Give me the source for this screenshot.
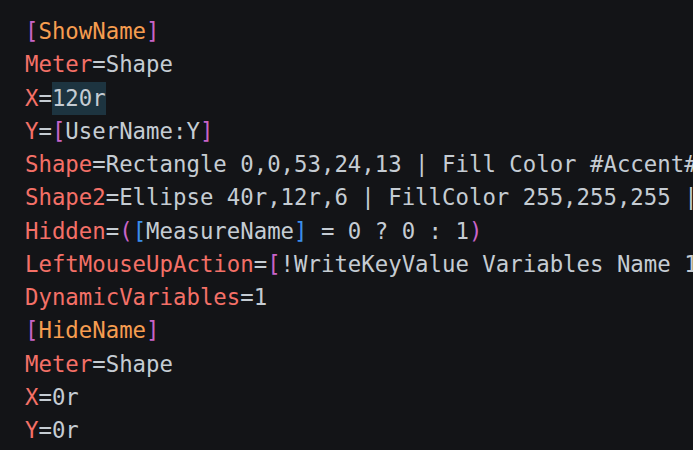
import React from 'react';

type Tok = [string, string];

const K = 'text-[#f47067]';
const V = 'text-[#c5ccd3]';
const S = 'text-[#f69d50]';
const P = 'text-[#c864c8]';
const B = 'text-[#3b8eea]';

const lines: Tok[][] = [
  [['[', P], ['ShowName', S], [']', P]],
  [['Meter', K], ['=Shape', V]],
  [['X', K], ['=', V], ['120r', V + ' inline-block bg-[#1d3440]']],
  [['Y', K], ['=', V], ['[', P], ['UserName:Y', V], [']', P]],
  [['Shape', K], ['=Rectangle 0,0,53,24,13 | Fill Color #Accent#,255 | StrokeWidth 0', V]],
  [['Shape2', K], ['=Ellipse 40r,12r,6 | FillColor 255,255,255 | StrokeWidth 0', V]],
  [['Hidden', K], ['=', V], ['(', P], ['[', B], ['MeasureName', V], [']', B], [' = 0 ? 0 : 1', V], [')', P]],
  [['LeftMouseUpAction', K], ['=', V], ['[', P], ['!WriteKeyValue Variables Name 1 "#@#Variables.inc"', V], [']', P]],
  [['DynamicVariables', K], ['=1', V]],
  [['[', P], ['HideName', S], [']', P]],
  [['Meter', K], ['=Shape', V]],
  [['X', K], ['=0r', V]],
  [['Y', K], ['=0r', V]],
];

export default function App() {
  return (
    <div className="h-[450px] w-full overflow-hidden bg-[#131417] pt-[15px] pl-[25px]">
      <div
        className="whitespace-pre text-[22.35px] leading-[33.25px]"
        style={{ fontFamily: '"DejaVu Sans Mono", "Liberation Mono", monospace' }}
      >
        {lines.map((line, i) => (
          <div key={i}>
            {line.map(([t, c], j) => (
              <span key={j} className={c}>{t}</span>
            ))}
          </div>
        ))}
      </div>
    </div>
  );
}
